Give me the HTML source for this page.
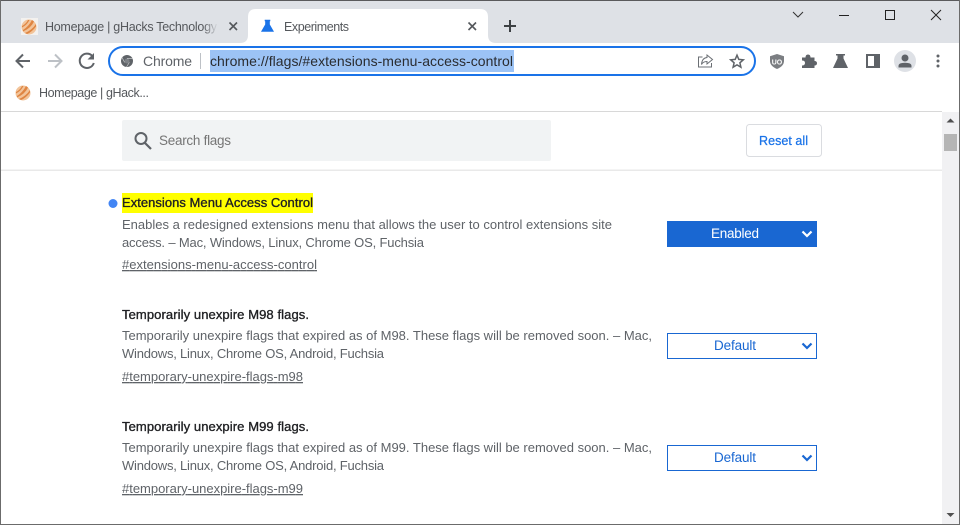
<!DOCTYPE html>
<html><head><meta charset="utf-8"><title>Experiments</title>
<style>
html,body{margin:0;padding:0;background:#fff;width:960px;height:525px;overflow:hidden}
svg{display:block}
text{font-family:"Liberation Sans",sans-serif;font-size:13px;white-space:pre}
.d{fill:#5f6368}
.t{fill:#202124;stroke:#202124;stroke-width:.35px;font-size:13px}
.l{fill:#5f6368;text-decoration:underline}
</style></head><body>
<svg width="960" height="525" viewBox="0 0 960 525" xmlns="http://www.w3.org/2000/svg">
<defs>
<linearGradient id="fade" x1="0" x2="1" y1="0" y2="0"><stop offset="0" stop-color="#dee1e6" stop-opacity="0"/><stop offset="1" stop-color="#dee1e6"/></linearGradient>
<g id="fav">
<circle cx="0" cy="0" r="7.5" fill="#f2c49a"/>
<path d="M-6 3Q0 -1 3 -7L5 -5.500Q2 1 -6 4.500ZM-4 6Q3 3 7 -3L7 -.5Q3 5 -2 7Z" fill="#df8542"/>
<path d="M-7 -1Q-3 -3 -1 -7L.5 -7Q-2 -2 -7 .5Z" fill="#df8542"/>
</g>
<path id="chev" d="M-4.500 -2L0 2.500L4.500 -2" fill="none" stroke-width="2.200"/>
</defs>

<!-- tab strip -->
<rect x="0" y="0" width="960" height="43" fill="#dee1e6"/>
<rect x="0" y="0" width="960" height="1" fill="#5a5a5c"/>

<!-- inactive tab -->
<rect x="21" y="18" width="17" height="17" fill="#f3f1ef"/>
<use href="#fav" x="29" y="27"/>
<text x="45" y="31" textLength="172" fill="#55585c" style="font-size:12.500px">Homepage | gHacks Technology</text>
<rect x="203" y="16" width="15" height="22" fill="url(#fade)"/>
<path d="M229.500 22.500L237 30M237 22.500L229.500 30" stroke="#55585c" stroke-width="1.600" fill="none"/>

<!-- active tab -->
<path d="M240 43Q248 43 248 35V17Q248 9 256 9H480Q488 9 488 17V35Q488 43 496 43Z" fill="#fff"/>
<path d="M265 20H270V21H269.500V24.500L273.500 31.500H261.500L265.500 24.500V21H265Z" fill="#1a73e8" stroke="#1a73e8" stroke-width=".6"/>
<text x="284" y="31" textLength="65" fill="#55585c" style="font-size:12.500px">Experiments</text>
<path d="M468.500 22.500L476 30M476 22.500L468.500 30" stroke="#55585c" stroke-width="1.600" fill="none"/>
<path d="M510 20V32M504 26H516" stroke="#3c4043" stroke-width="2" fill="none"/>

<!-- window controls -->
<path d="M793 12L798 17L803 12" fill="none" stroke="#333" stroke-width="1"/>
<rect x="839" y="15" width="10" height="1" fill="#222"/>
<rect x="885.500" y="10.500" width="9" height="9" fill="none" stroke="#222" stroke-width="1"/>
<path d="M931 10L941 20M941 10L931 20" stroke="#222" stroke-width="1" fill="none"/>

<!-- toolbar -->
<rect x="0" y="43" width="960" height="68" fill="#fff"/>
<path d="M30 61H17M23 54.500L16.500 61L23 67.500" fill="none" stroke="#5f6368" stroke-width="2"/>
<path d="M48 61H61M55 54.500L61.500 61L55 67.500" fill="none" stroke="#bdc1c6" stroke-width="2"/>
<path d="M92.300 56A7.200 7.200 0 1 0 93.800 63" fill="none" stroke="#5f6368" stroke-width="2"/>
<path d="M94 53V59.500H87.500Z" fill="#5f6368"/>

<!-- omnibox -->
<rect x="109" y="47" width="646" height="28" rx="14" fill="#fff" stroke="#1a73e8" stroke-width="2"/>
<circle cx="127" cy="61" r="6" fill="#5f6368"/>
<circle cx="127" cy="61" r="2.500" fill="#7d8186"/>
<path d="M127 58.300H132.500M124.600 62.400L122 57.500M129.400 62.400L126.500 67" stroke="#d5d7d9" stroke-width=".6" fill="none"/>
<text x="143" y="66" textLength="49" fill="#5f6368" style="font-size:14px">Chrome</text>
<rect x="200" y="53" width="1" height="16" fill="#bdc1c6"/>
<rect x="210" y="50" width="304" height="22" fill="#9cc3f5"/>
<text x="210" y="66" textLength="303" fill="#2a2c30" style="font-size:14px">chrome://flags/#extensions-menu-access-control</text>
<!-- share -->
<path d="M702.500 57H698.500V67H711.500V63" fill="none" stroke="#6b6f74" stroke-width="1"/>
<path d="M707 55L712.500 59.500L707 64V61.500Q703 61.500 701.500 64.500Q702 58 707 57.500Z" fill="#fff" stroke="#6b6f74" stroke-width="1"/>
<!-- star -->
<path d="M737 55.200L738.800 59.400L743.300 59.800L739.900 62.800L740.900 67.200L737 64.900L733.100 67.200L734.100 62.800L730.700 59.800L735.200 59.400Z" fill="#fff" stroke="#5f6368" stroke-width="1.500"/>
<!-- uBlock -->
<path d="M777 54L784 56.200V61Q784 66 777 69Q770 66 770 61V56.200Z" fill="#7b7e82"/>
<text x="777" y="64.500" text-anchor="middle" fill="#fff" font-weight="bold" style="font-size:7px">UO</text>
<!-- puzzle -->
<path d="M802 57.500H805.500Q805.500 54.500 808 54.500Q810.500 54.500 810.500 57.500H814.500V61Q817 61 817 63.300Q817 65.500 814.500 65.500V68H802V65.500Q805 65.500 805 63Q805 60.500 802 60.500Z" fill="#5f6368"/>
<!-- flask -->
<path d="M836 54H845V55.500H843.500V58.500L848 68H833L837.500 58.500V55.500H836Z" fill="#5f6368"/>
<!-- side panel -->
<rect x="867" y="55" width="12" height="12" fill="#fff" stroke="#5f6368" stroke-width="2"/>
<rect x="874" y="55" width="6" height="13" fill="#5f6368"/>
<!-- avatar -->
<circle cx="905" cy="61" r="11" fill="#dee1e6"/>
<circle cx="905" cy="58" r="3.500" fill="#5f6368"/>
<path d="M898.500 67.500V66Q898.500 62.800 905 62.800Q911.500 62.800 911.500 66V67.500Z" fill="#5f6368"/>
<!-- menu -->
<circle cx="938" cy="56" r="1.500" fill="#5f6368"/><circle cx="938" cy="61" r="1.500" fill="#5f6368"/><circle cx="938" cy="66" r="1.500" fill="#5f6368"/>

<!-- bookmarks -->
<use href="#fav" x="23" y="93"/>
<text x="39" y="97" textLength="110" fill="#55585c" style="font-size:12.500px">Homepage | gHack...</text>
<rect x="0" y="111" width="942" height="1" fill="#d8d8d8"/>

<!-- sticky header -->
<rect x="122" y="120" width="429" height="41" rx="2" fill="#f1f3f4"/>
<circle cx="141" cy="138.500" r="5.500" fill="none" stroke="#5f6368" stroke-width="2"/>
<path d="M145 143L151 149" stroke="#5f6368" stroke-width="2.200"/>
<text x="159" y="145" textLength="72" fill="#757575" style="font-size:13.500px">Search flags</text>
<rect x="746.500" y="124.500" width="75" height="32" rx="3" fill="#fff" stroke="#dadce0"/>
<text x="759" y="145" textLength="49" fill="#1a73e8" stroke="#1a73e8" stroke-width=".25" style="font-size:12.500px">Reset all</text>
<rect x="0" y="169.500" width="942" height="1.500" fill="#e9e9e9"/>

<!-- flag 1 -->
<circle cx="113" cy="203.500" r="4.500" fill="#4285f4"/>
<rect x="122" y="193" width="191" height="20" fill="#ffff00"/>
<text class="t" x="122" y="207" textLength="191">Extensions Menu Access Control</text>
<text class="d" x="122" y="229" textLength="490">Enables a redesigned extensions menu that allows the user to control extensions site</text>
<text class="d" x="122" y="247" textLength="302">access. – Mac, Windows, Linux, Chrome OS, Fuchsia</text>
<text class="l" x="122" y="269" textLength="195">#extensions-menu-access-control</text>
<rect x="667" y="221" width="150" height="26" fill="#1967d2"/>
<text x="711" y="238" textLength="48" fill="#fff" style="font-size:13.500px">Enabled</text>
<use href="#chev" x="807" y="233.500" stroke="#fff"/>

<!-- flag 2 -->
<text class="t" x="122" y="319" textLength="187">Temporarily unexpire M98 flags.</text>
<text class="d" x="122" y="340" textLength="530">Temporarily unexpire flags that expired as of M98. These flags will be removed soon. – Mac,</text>
<text class="d" x="122" y="358" textLength="262">Windows, Linux, Chrome OS, Android, Fuchsia</text>
<text class="l" x="122" y="381" textLength="181">#temporary-unexpire-flags-m98</text>
<rect x="667.500" y="333.500" width="149" height="25" fill="#fff" stroke="#1967d2"/>
<text x="714" y="350" textLength="42" fill="#1967d2" style="font-size:13.500px">Default</text>
<use href="#chev" x="807" y="345.500" stroke="#1967d2"/>

<!-- flag 3 -->
<text class="t" x="122" y="431" textLength="187">Temporarily unexpire M99 flags.</text>
<text class="d" x="122" y="452" textLength="530">Temporarily unexpire flags that expired as of M99. These flags will be removed soon. – Mac,</text>
<text class="d" x="122" y="470" textLength="262">Windows, Linux, Chrome OS, Android, Fuchsia</text>
<text class="l" x="122" y="493" textLength="181">#temporary-unexpire-flags-m99</text>
<rect x="667.500" y="445.500" width="149" height="25" fill="#fff" stroke="#1967d2"/>
<text x="714" y="462" textLength="42" fill="#1967d2" style="font-size:13.500px">Default</text>
<use href="#chev" x="807" y="457.500" stroke="#1967d2"/>

<!-- scrollbar -->
<rect x="942" y="112" width="17" height="412" fill="#f1f1f3"/>
<path d="M950.500 118.500L954.500 122.500H946.500Z" fill="#505050"/>
<rect x="944" y="134" width="13" height="17" fill="#b5b5b5"/>
<path d="M946.500 513H954.500L950.500 517Z" fill="#505050"/>

<!-- window frame -->
<rect x="0" y="0" width="1" height="525" fill="#6b6b6b"/>
<rect x="959" y="0" width="1" height="525" fill="#6b6b6b"/>
<rect x="0" y="524" width="960" height="1" fill="#6b6b6b"/>
</svg>
</body></html>
